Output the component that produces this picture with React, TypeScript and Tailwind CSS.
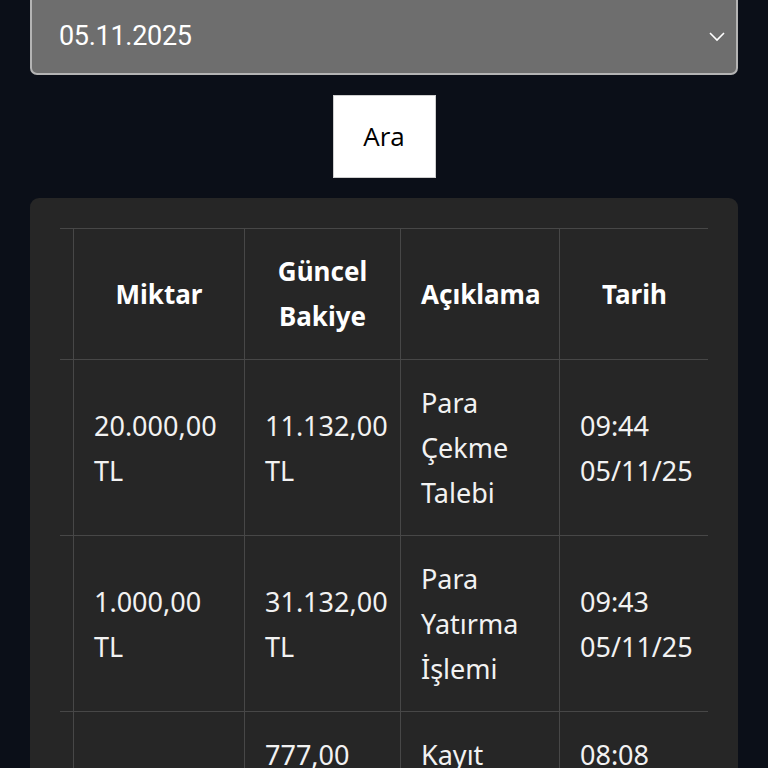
import React from "react";

type Row = { miktar: string; bakiye: string; aciklama: string; tarih: string };

const rows: Row[] = [
  { miktar: "20.000,00 TL", bakiye: "11.132,00 TL", aciklama: "Para Çekme Talebi", tarih: "09:44 05/11/25" },
  { miktar: "1.000,00 TL", bakiye: "31.132,00 TL", aciklama: "Para Yatırma İşlemi", tarih: "09:43 05/11/25" },
  { miktar: "777,00 TL", bakiye: "777,00 TL", aciklama: "Kayıt Bonusu", tarih: "08:08 05/11/25" },
];

export default function App() {
  const cell = "border border-[#474747] px-5 py-5 align-middle";
  return (
    <div className="w-full bg-[#0b0f18] overflow-hidden" style={{ height: 768 }}>
      <div className="px-[30px] flex flex-col">
        <div className="-mt-[6px] h-[81px] rounded-[7px] border-2 border-[#b4b4b4] bg-[#6e6e6e] flex items-center justify-between pl-[27px] pr-[10px]">
          <span
            className="text-[27px] text-white pt-[3px] tracking-[-0.3px]"
            style={{ fontFamily: "Roboto, 'Noto Sans', sans-serif" }}
          >
            05.11.2025
          </span>
          <svg width="18" height="12" viewBox="0 0 18 12" className="mt-[2px]">
            <polyline points="2,3 9,10 16,3" fill="none" stroke="#ffffff" strokeWidth="1.6" />
          </svg>
        </div>
        <div className="flex justify-center mt-5">
          <button
            className="w-[103px] h-[83px] bg-white border border-[#cfcfcf] text-black text-[26px]"
            style={{ fontFamily: "'Open Sans', 'Noto Sans', sans-serif" }}
          >
            Ara
          </button>
        </div>
        <div className="mt-5 rounded-[9px] bg-[#262626] pt-[30px] px-[30px] pb-[30px]">
          <div className="overflow-hidden">
            <table
              className="table-fixed border-collapse -ml-[87px] text-[#f2f2f2]"
              style={{ width: 736, fontFamily: "'Noto Sans', sans-serif" }}
            >
              <colgroup>
                <col style={{ width: 100 }} />
                <col style={{ width: 171 }} />
                <col style={{ width: 156 }} />
                <col style={{ width: 159 }} />
                <col style={{ width: 150 }} />
              </colgroup>
              <thead>
                <tr className="text-[26px] leading-[45px] font-bold text-white">
                  <th className={cell}></th>
                  <th className={cell + " text-center"}>Miktar</th>
                  <th className={cell + " text-center"}>Güncel Bakiye</th>
                  <th className={cell + " text-center"}>Açıklama</th>
                  <th className={cell + " text-center"}>Tarih</th>
                </tr>
              </thead>
              <tbody>
                {rows.map((r, i) => (
                  <tr key={i} className="text-[27px] leading-[45px] font-normal">
                    <td className={cell}></td>
                    <td className={cell}>{r.miktar}</td>
                    <td className={cell}>{r.bakiye}</td>
                    <td className={cell}>{r.aciklama}</td>
                    <td className={cell}>{r.tarih}</td>
                  </tr>
                ))}
              </tbody>
            </table>
          </div>
        </div>
      </div>
    </div>
  );
}
